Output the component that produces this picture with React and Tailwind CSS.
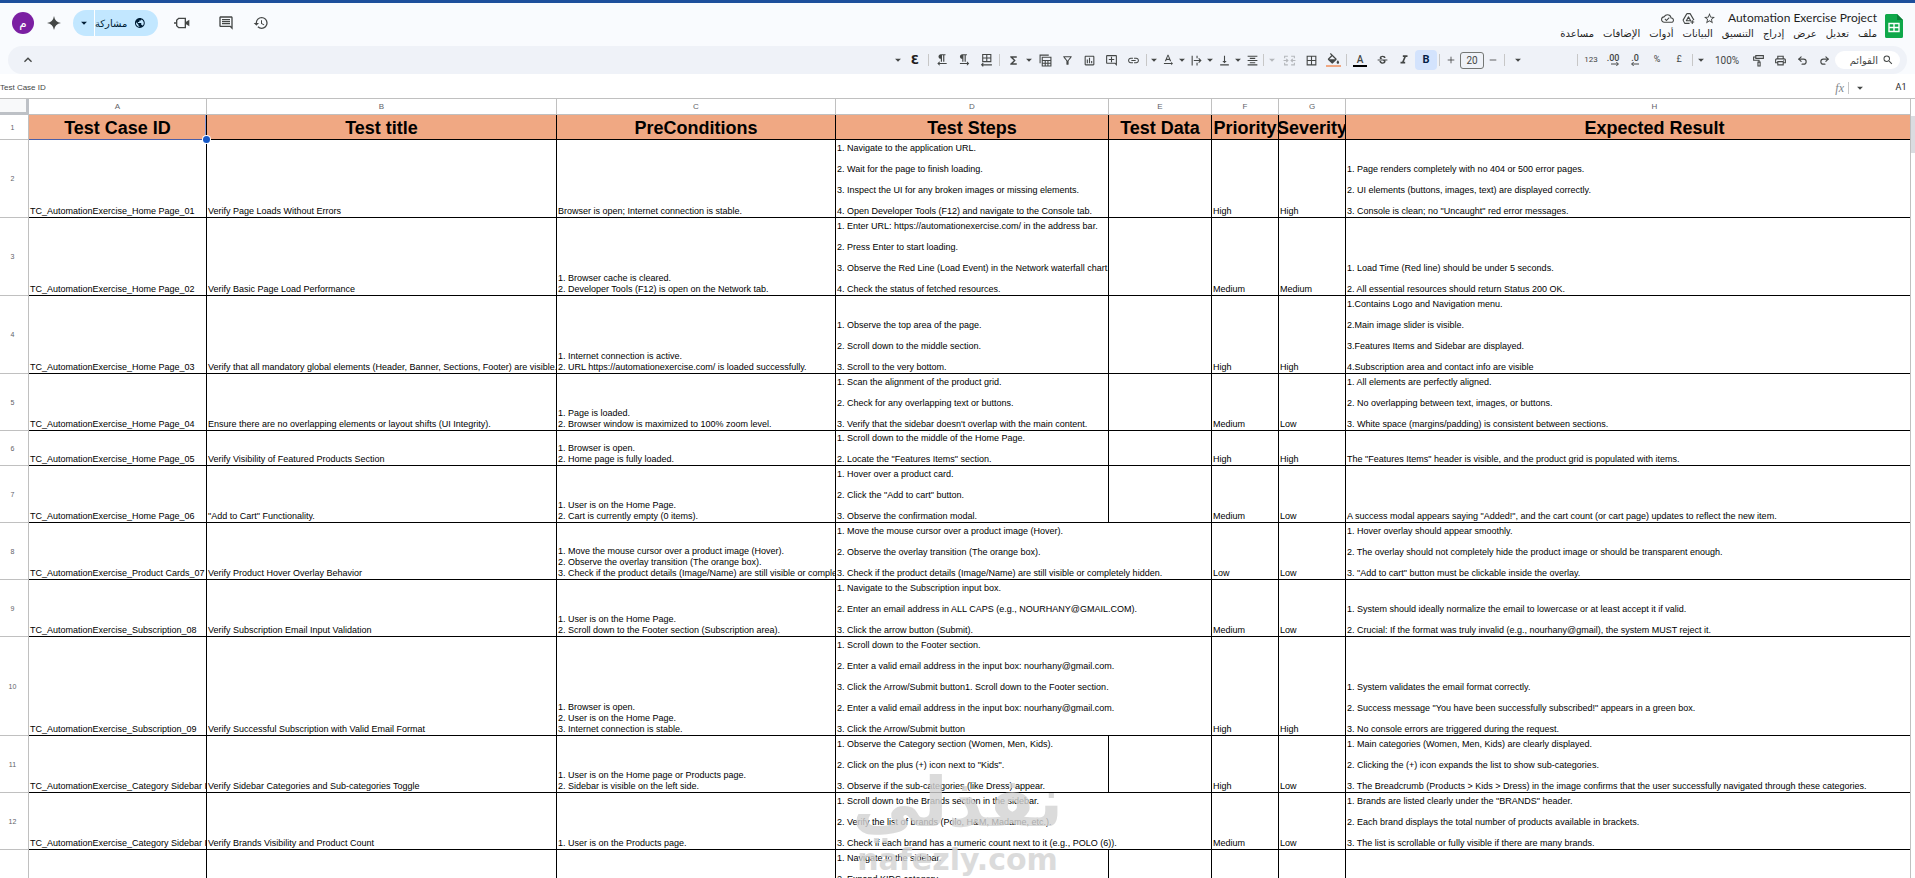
import clsx from "clsx";
import { Redo2, Undo2, Minus, Plus } from "lucide-react";
import {
  MdArrowDropDown,
  MdBorderAll,
  MdFormatAlignCenter,
  MdFormatColorFill,
  MdFormatItalic,
  MdFormatTextdirectionLToR,
  MdFormatTextdirectionRToL,
  MdFunctions,
  MdHistory,
  MdKeyboardArrowUp,
  MdLink,
  MdOutlineAddComment,
  MdOutlineCloudDone,
  MdOutlineComment,
  MdOutlineFilterAlt,
  MdOutlineInsertChart,
  MdOutlinePrint,
  MdPublic,
  MdSearch,
  MdStarBorder,
  MdStrikethroughS,
  MdTextRotationNone,
  MdVerticalAlignBottom,
} from "react-icons/md";

const menus = [
  "ملف",
  "تعديل",
  "عرض",
  "إدراج",
  "التنسيق",
  "البيانات",
  "أدوات",
  "الإضافات",
  "مساعدة",
];

const columns = [
  { letter: "A", title: "Test Case ID", width: "w-[178px]" },
  { letter: "B", title: "Test title", width: "w-[350px]" },
  { letter: "C", title: "PreConditions", width: "w-[279px]" },
  { letter: "D", title: "Test Steps", width: "w-[273px]" },
  { letter: "E", title: "Test Data", width: "w-[103px]" },
  { letter: "F", title: "Priority", width: "w-[67px]" },
  { letter: "G", title: "Severity", width: "w-[67px]" },
  { letter: "H", title: "Expected Result", width: "" },
];

// wide: the steps run over into the empty Test Data cell
const testCases = [
  {
    id: "TC_AutomationExercise_Home Page_01",
    height: "h-[78px]",
    title: "Verify Page Loads Without Errors",
    pre: ["Browser is open; Internet connection is stable."],
    steps: [
      "1. Navigate to the application URL.",
      "2. Wait for the page to finish loading.",
      "3. Inspect the UI for any broken images or missing elements.",
      "4. Open Developer Tools (F12) and navigate to the Console tab.",
    ],
    priority: "High",
    severity: "High",
    expected: [
      "1. Page renders completely with no 404 or 500 error pages.",
      "2. UI elements (buttons, images, text) are displayed correctly.",
      '3. Console is clean; no "Uncaught" red error messages.',
    ],
  },
  {
    id: "TC_AutomationExercise_Home Page_02",
    height: "h-[78px]",
    title: "Verify Basic Page Load Performance",
    pre: [
      "1. Browser cache is cleared.",
      "2. Developer Tools (F12) is open on the Network tab.",
    ],
    steps: [
      "1. Enter URL: https://automationexercise.com/ in the address bar.",
      "2. Press Enter to start loading.",
      "3. Observe the Red Line (Load Event) in the Network waterfall chart.",
      "4. Check the status of fetched resources.",
    ],
    priority: "Medium",
    severity: "Medium",
    expected: [
      "1. Load Time (Red line) should be under 5 seconds.",
      "2. All essential resources should return Status 200 OK.",
    ],
  },
  {
    id: "TC_AutomationExercise_Home Page_03",
    height: "h-[78px]",
    title:
      "Verify that all mandatory global elements (Header, Banner, Sections, Footer) are visible.",
    pre: [
      "1. Internet connection is active.",
      "2. URL https://automationexercise.com/ is loaded successfully.",
    ],
    steps: [
      "1. Observe the top area of the page.",
      "2. Scroll down to the middle section.",
      "3. Scroll to the very bottom.",
    ],
    priority: "High",
    severity: "High",
    expected: [
      "1.Contains Logo and Navigation menu.",
      "2.Main image slider is visible.",
      "3.Features Items and Sidebar are displayed.",
      "4.Subscription area and contact info are visible",
    ],
  },
  {
    id: "TC_AutomationExercise_Home Page_04",
    height: "h-[57px]",
    title: "Ensure there are no overlapping elements or layout shifts (UI Integrity).",
    pre: [
      "1. Page is loaded.",
      "2. Browser window is maximized to 100% zoom level.",
    ],
    steps: [
      "1. Scan the alignment of the product grid.",
      "2. Check for any overlapping text or buttons.",
      "3. Verify that the sidebar doesn't overlap with the main content.",
    ],
    priority: "Medium",
    severity: "Low",
    expected: [
      "1. All elements are perfectly aligned.",
      "2. No overlapping between text, images, or buttons.",
      "3. White space (margins/padding) is consistent between sections.",
    ],
  },
  {
    id: "TC_AutomationExercise_Home Page_05",
    height: "h-[35px]",
    title: "Verify Visibility of Featured Products Section",
    pre: ["1. Browser is open.", "2. Home page is fully loaded."],
    steps: [
      "1. Scroll down to the middle of the Home Page.",
      '2. Locate the "Features Items" section.',
    ],
    priority: "High",
    severity: "High",
    expected: [
      'The "Features Items" header is visible, and the product grid is populated with items.',
    ],
  },
  {
    id: "TC_AutomationExercise_Home Page_06",
    height: "h-[57px]",
    title: '"Add to Cart" Functionality.',
    pre: ["1. User is on the Home Page.", "2. Cart is currently empty (0 items)."],
    steps: [
      "1. Hover over a product card.",
      '2. Click the "Add to cart" button.',
      "3. Observe the confirmation modal.",
    ],
    priority: "Medium",
    severity: "Low",
    expected: [
      'A success modal appears saying "Added!", and the cart count (or cart page) updates to reflect the new item.',
    ],
  },
  {
    id: "TC_AutomationExercise_Product Cards_07",
    height: "h-[57px]",
    wide: true,
    title: "Verify Product Hover Overlay Behavior",
    pre: [
      "1. Move the mouse cursor over a product image (Hover).",
      "2. Observe the overlay transition (The orange box).",
      "3. Check if the product details (Image/Name) are still visible or completely hidden.",
    ],
    steps: [
      "1. Move the mouse cursor over a product image (Hover).",
      "2. Observe the overlay transition (The orange box).",
      "3. Check if the product details (Image/Name) are still visible or completely hidden.",
    ],
    priority: "Low",
    severity: "Low",
    expected: [
      "1. Hover overlay should appear smoothly.",
      "2. The overlay should not completely hide the product image or should be transparent enough.",
      '3. "Add to cart" button must be clickable inside the overlay.',
    ],
  },
  {
    id: "TC_AutomationExercise_Subscription_08",
    height: "h-[57px]",
    wide: true,
    title: "Verify Subscription Email Input Validation",
    pre: [
      "1. User is on the Home Page.",
      "2. Scroll down to the Footer section (Subscription area).",
    ],
    steps: [
      "1. Navigate to the Subscription input box.",
      "2. Enter an email address in ALL CAPS (e.g., NOURHANY@GMAIL.COM).",
      "3. Click the arrow button (Submit).",
    ],
    priority: "Medium",
    severity: "Low",
    expected: [
      "1. System should ideally normalize the email to lowercase or at least accept it if valid.",
      "2. Crucial: If the format was truly invalid (e.g., nourhany@gmail), the system MUST reject it.",
    ],
  },
  {
    id: "TC_AutomationExercise_Subscription_09",
    height: "h-[99px]",
    wide: true,
    title: "Verify Successful Subscription with Valid Email Format",
    pre: [
      "1. Browser is open.",
      "2. User is on the Home Page.",
      "3. Internet connection is stable.",
    ],
    steps: [
      "1. Scroll down to the Footer section.",
      "2. Enter a valid email address in the input box: nourhany@gmail.com.",
      "3. Click the Arrow/Submit button1. Scroll down to the Footer section.",
      "2. Enter a valid email address in the input box: nourhany@gmail.com.",
      "3. Click the Arrow/Submit button",
    ],
    priority: "High",
    severity: "High",
    expected: [
      "1. System validates the email format correctly.",
      '2. Success message "You have been successfully subscribed!" appears in a green box.',
      "3. No console errors are triggered during the request.",
    ],
  },
  {
    id: "TC_AutomationExercise_Category Sidebar Interaction_10",
    height: "h-[57px]",
    title: "Verify Sidebar Categories and Sub-categories Toggle",
    pre: [
      "1. User is on the Home page or Products page.",
      "2. Sidebar is visible on the left side.",
    ],
    steps: [
      "1. Observe the Category section (Women, Men, Kids).",
      '2. Click on the plus (+) icon next to "Kids".',
      "3. Observe if the sub-categories (like Dress) appear.",
    ],
    priority: "High",
    severity: "Low",
    expected: [
      "1. Main categories (Women, Men, Kids) are clearly displayed.",
      "2. Clicking the (+) icon expands the list to show sub-categories.",
      "3. The Breadcrumb (Products > Kids > Dress) in the image confirms that the user successfully navigated through these categories.",
    ],
  },
  {
    id: "TC_AutomationExercise_Category Sidebar Interaction_11",
    height: "h-[57px]",
    wide: true,
    title: "Verify Brands Visibility and Product Count",
    pre: ["1. User is on the Products page."],
    steps: [
      "1. Scroll down to the Brands section in the sidebar.",
      "2. Verify the list of brands (Polo, H&M, Madame, etc.).",
      "3. Check if each brand has a numeric count next to it (e.g., POLO (6)).",
    ],
    priority: "Medium",
    severity: "Low",
    expected: [
      '1. Brands are listed clearly under the "BRANDS" header.',
      "2. Each brand displays the total number of products available in brackets.",
      "3. The list is scrollable or fully visible if there are many brands.",
    ],
  },
  {
    id: "",
    height: "h-[78px]",
    title: "",
    pre: [],
    steps: ["1. Navigate to the sidebar.", "2. Expand KIDS category.", "", ""],
    priority: "",
    severity: "",
    expected: [],
  },
];

function Icon({ children, className = "size-[14px]" }) {
  return (
    <svg
      viewBox="0 0 24 24"
      fill="none"
      stroke="currentColor"
      strokeWidth="2"
      className={className}
      aria-hidden="true"
    >
      {children}
    </svg>
  );
}

function SheetsLogo() {
  return (
    <svg viewBox="0 0 18 24" className="mt-1 h-6 w-[18px] shrink-0" aria-hidden="true">
      <path d="M1.500 0H12l6 6v16.500a1.500 1.500 0 0 1-1.500 1.500h-15A1.500 1.500 0 0 1 0 22.500v-21A1.500 1.500 0 0 1 1.500 0z" fill="#0fa84a" />
      <path d="M12 0l6 6h-6z" fill="#0b7f38" />
      <path d="M4 9.500h10v8H4zM4 13.500h10M9 9.500v8" fill="none" stroke="#fff" strokeWidth="1.400" />
    </svg>
  );
}

function Tool({ label, narrow, active, children }) {
  return (
    <button
      aria-label={label}
      className={clsx(
        "flex h-5 shrink-0 items-center justify-center rounded-sm",
        narrow ? "w-[18px]" : "w-[22px]",
        active && "bg-[#d3e3fd] text-[#041e49]"
      )}
    >
      {children}
    </button>
  );
}

function Caret({ label, narrow, muted }) {
  return (
    <button
      aria-label={label}
      className={clsx(
        "flex h-5 shrink-0 items-center justify-center",
        narrow ? "w-[10px]" : "w-3",
        muted && "text-[#b4b7bb]"
      )}
    >
      <MdArrowDropDown className="size-[14px] shrink-0" />
    </button>
  );
}

function Divider() {
  return <span className="mx-[2px] h-3 w-px shrink-0 bg-[#c7c7c7]" />;
}

function Decimals({ text, path }) {
  return (
    <span className="flex flex-col items-center text-[9px] leading-[8px] font-medium">
      <span dir="ltr">{text}</span>
      <svg viewBox="0 0 12 6" className="h-1 w-2 self-start" fill="none" stroke="currentColor" strokeWidth="1.500" aria-hidden="true">
        <path d={path} />
      </svg>
    </span>
  );
}

function Header() {
  return (
    <header dir="rtl" className="flex h-[43px] items-start justify-between px-3">
      <div className="flex pt-[7px]">
        <SheetsLogo />
        <div className="ms-2">
          <div className="flex h-4 items-center text-[#444746]">
            <h1 className="font-['Lato'] text-[12px] leading-4 text-[#1f1f1f]">
              Automation Exercise Project
            </h1>
            <div className="ms-3 flex items-center gap-2">
              <button aria-label="Star"><MdStarBorder className="size-[13px]" /></button>
              <button aria-label="Move">
                <Icon className="size-[13px]">
                  <path d="M9 3h6l7 12M9 3L2 15l3 6h9M12 9l-4 7h8z" strokeLinejoin="round" />
                  <path d="M19 15v7M15.500 18.500h7" />
                </Icon>
              </button>
              <button aria-label="Saved to Drive"><MdOutlineCloudDone className="size-[13px]" /></button>
            </div>
          </div>
          <nav className="flex gap-[9px] text-[10px] leading-4 text-[#1f1f1f]">
            {menus.map((menu) => (
              <button key={menu}>{menu}</button>
            ))}
          </nav>
        </div>
      </div>

      <div className="flex items-center pt-[7px] text-[#444746]">
        <button aria-label="History" className="me-[19px]"><MdHistory className="size-4" /></button>
        <button aria-label="Comments" className="me-7"><MdOutlineComment className="size-4" /></button>
        <button aria-label="Meet" className="me-4">
          <Icon className="size-4">
            <path d="M0 12h4M4 8l3-3h10v14H7l-3-3z" />
            <path d="M17 11l6-4v10l-6-4z" fill="currentColor" stroke="none" />
          </Icon>
        </button>
        <div className="me-3 flex h-[26px] overflow-hidden rounded-full bg-[#c2e7ff] text-[10px] text-[#001d35]">
          <button className="flex w-[63px] items-center gap-[7px] ps-3">
            <MdPublic className="size-3" />
            مشاركة
          </button>
          <button aria-label="Share options" className="flex w-[22px] items-center justify-center border-s border-white">
            <MdArrowDropDown className="size-[14px]" />
          </button>
        </div>
        <button aria-label="Gemini" className="me-[13px]">
          <Icon className="size-[14px]">
            <path d="M12 0q1.500 10.500 12 12q-10.500 1.500-12 12q-1.500-10.500-12-12q10.500-1.500 12-12z" fill="currentColor" stroke="none" />
          </Icon>
        </button>
        <button className="size-[22px] rounded-full bg-[#7b1fa2] text-[12px] leading-5 text-white">م</button>
      </div>
    </header>
  );
}

function Toolbar() {
  return (
    <div
      dir="rtl"
      className="mx-2 flex h-7 items-center rounded-full bg-[#eff2f8] ps-[7px] pe-3 text-[10px] text-[#444746]"
    >
      <label className="flex h-[18px] w-[65px] shrink-0 items-center gap-1 rounded-full bg-white ps-[6px]">
        <MdSearch className="size-3 shrink-0" />
        <input
          aria-label="القوائم"
          placeholder="القوائم"
          className="w-full min-w-0 bg-transparent text-[10px] outline-none placeholder:text-[#444746]"
        />
      </label>
      <Tool label="Undo"><Redo2 className="size-[11px]" strokeWidth={2.5} /></Tool>
      <Tool label="Redo"><Undo2 className="size-[11px]" strokeWidth={2.5} /></Tool>
      <Tool label="Print"><MdOutlinePrint className="size-[13px]" /></Tool>
      <Tool label="Paint format">
        <Icon className="size-[13px]">
          <path d="M7 3h14v5H7zM7 5.500H3v6h10v3M11 15h4v7h-4z" />
        </Icon>
      </Tool>
      <span className="w-10 shrink-0 text-center text-[10px]">100%</span>
      <Caret label="Zoom" />
      <Divider />
      <Tool label="Currency"><span className="text-[9px]">£</span></Tool>
      <Tool label="Percent"><span className="text-[9px]">%</span></Tool>
      <Tool label="Decrease decimals"><Decimals text=".0" path="M12 3H1M4 0L1 3l3 3" /></Tool>
      <Tool label="Increase decimals"><Decimals text=".00" path="M0 3h11M8 0l3 3l-3 3" /></Tool>
      <Tool label="Number format"><span className="text-[8px]">123</span></Tool>
      <Divider />
      <button aria-label="Font" className="flex h-5 w-[68px] shrink-0 items-center justify-end pe-1">
        <MdArrowDropDown className="size-[14px]" />
      </button>
      <Divider />
      <Tool label="Decrease font size" narrow><Minus className="size-[10px]" /></Tool>
      <input
        aria-label="Font size"
        defaultValue="20"
        className="h-[17px] w-6 shrink-0 rounded-[3px] border border-[#747775] bg-transparent text-center text-[10px]"
      />
      <Tool label="Increase font size" narrow><Plus className="size-[10px]" /></Tool>
      <Divider />
      <Tool label="Bold" active><span className="text-[11px] font-bold">B</span></Tool>
      <Tool label="Italic"><MdFormatItalic className="size-[14px]" /></Tool>
      <Tool label="Strikethrough"><MdStrikethroughS className="size-[13px]" /></Tool>
      <Tool label="Text color">
        <span className="w-[14px] border-b-2 border-black text-center text-[10px] leading-[11px] font-medium">A</span>
      </Tool>
      <Divider />
      <Tool label="Fill color">
        <span className="flex h-[14px] w-[15px] justify-center overflow-hidden border-b-2 border-[#f0a883]">
          <MdFormatColorFill className="size-[15px] shrink-0" />
        </span>
      </Tool>
      <Tool label="Borders"><MdBorderAll className="size-[13px]" /></Tool>
      <Tool label="Merge cells">
        <Icon className="size-[13px] text-[#b4b7bb]">
          <path d="M3 8V4h6M15 4h6v4M3 16v4h6M15 20h6v-4M1 12h7M16 12h7M6 9l3 3l-3 3M18 9l-3 3l3 3" />
        </Icon>
      </Tool>
      <Caret label="Merge type" muted />
      <Divider />
      <Tool label="Horizontal align" narrow><MdFormatAlignCenter className="size-[13px]" /></Tool>
      <Caret label="Horizontal align options" narrow />
      <Tool label="Vertical align" narrow><MdVerticalAlignBottom className="size-[13px]" /></Tool>
      <Caret label="Vertical align options" narrow />
      <Tool label="Text wrapping" narrow>
        <Icon className="size-[13px]">
          <path d="M4 3v18M7 12h13M16 8l4 4l-4 4M13 3v5M13 16v5" />
        </Icon>
      </Tool>
      <Caret label="Text wrapping options" narrow />
      <Tool label="Text rotation" narrow><MdTextRotationNone className="size-[14px]" /></Tool>
      <Caret label="Text rotation options" narrow />
      <Divider />
      <Tool label="Insert link"><MdLink className="size-[13px]" /></Tool>
      <Tool label="Insert comment"><MdOutlineAddComment className="size-[13px]" /></Tool>
      <Tool label="Insert chart"><MdOutlineInsertChart className="size-[13px]" /></Tool>
      <Tool label="Create filter"><MdOutlineFilterAlt className="size-[13px]" /></Tool>
      <Tool label="Table views">
        <Icon className="size-[13px]">
          <path d="M2 17V2h16M6 6h16v16H6zM6 12h16M11.500 12v10M16.500 12v10M6 17h16" />
        </Icon>
      </Tool>
      <Caret label="Table view options" narrow />
      <Tool label="Functions"><MdFunctions className="size-[13px]" /></Tool>
      <Divider />
      <Tool label="Sheet direction">
        <Icon className="size-[13px]">
          <path d="M5 1h15v13H5zM12.500 1v13M5 7.500h15M22 20H3M6 17l-3 3l3 3" />
        </Icon>
      </Tool>
      <Tool label="Left to right"><MdFormatTextdirectionLToR className="size-[14px]" /></Tool>
      <Tool label="Right to left"><MdFormatTextdirectionRToL className="size-[14px]" /></Tool>
      <Divider />
      <Tool label="Input tools"><span className="text-[12px] leading-4 font-bold text-[#1f1f1f]">Ɛ</span></Tool>
      <Caret label="Input tools options" />
      <button aria-label="Hide the menus" className="ms-auto">
        <MdKeyboardArrowUp className="size-4" />
      </button>
    </div>
  );
}

function FormulaBar() {
  return (
    <div dir="rtl" className="flex h-6 items-center bg-white pt-1 text-[#444746]">
      <input
        aria-label="Cell"
        dir="ltr"
        defaultValue="A1"
        className="mr-1 ml-6 w-5 text-center text-[9px] text-[#1f1f1f] outline-none"
      />
      <button aria-label="Named ranges"><MdArrowDropDown className="size-[14px]" /></button>
      <span className="mx-1 h-3 w-px bg-[#c7c7c7]" />
      <span className="font-['Liberation_Serif'] text-[12px] text-[#80868b] italic">fx</span>
      <input
        aria-label="Formula"
        dir="ltr"
        defaultValue="Test Case ID"
        className="min-w-0 flex-1 font-['Liberation_Sans'] text-[8px] outline-none"
      />
    </div>
  );
}

function Cell({ lines, spaced, wide, last }) {
  return (
    <td
      colSpan={wide ? 2 : 1}
      className={clsx(
        "overflow-hidden border-b border-black pl-px align-bottom",
        !last && "border-r"
      )}
    >
      <div className={clsx("flex flex-col justify-end", spaced && "gap-[10px]")}>
        {lines.map((line, i) => (
          <p key={i} className="h-[11px] whitespace-nowrap">{line}</p>
        ))}
      </div>
    </td>
  );
}

function Sheet() {
  return (
    <div className="flex min-h-0 flex-1 overflow-hidden border-t border-[#c0c0c0] bg-white font-['Liberation_Sans']">
      {/* the last column runs on past the right edge */}
      <div className="min-w-0 flex-1 overflow-hidden">
        <table className="w-[calc(100%+53px)] table-fixed border-separate border-spacing-0 text-[9px] leading-[11px] text-black">
          <thead>
            <tr className="h-4 text-[8px] leading-[10px] text-[#5f6368]">
              <td className="w-[29px] border-r-[3px] border-b-[3px] border-[#bdc1c6] bg-[#f8f9fa]" />
              {columns.map((column) => (
                <th
                  key={column.letter}
                  className={clsx("border-b border-[#c0c0c0] font-normal", column.width, column.letter !== "H" && "border-r")}
                >
                  {column.letter}
                </th>
              ))}
            </tr>
          </thead>
          <tbody>
            <tr className="h-[25px]">
              <th className="border-r border-b border-[#c0c0c0] pr-[3px] text-[7px] font-normal text-[#5f6368]">1</th>
              {columns.map(({ letter, title }) => (
                <th
                  key={letter}
                  className={clsx(
                    "relative border-b bg-[#f0a883] pt-[2px] text-[18px] leading-5 font-bold whitespace-nowrap",
                    letter === "A" ? "border-r border-r-black border-b-[#4a5fa8]" : "border-black",
                    letter !== "H" && "border-r"
                  )}
                >
                  <span className="flex justify-center">{title}</span>
                  {letter === "A" && (
                    <>
                      <span className="absolute inset-y-0 right-0 w-px bg-[#8a9bd8]" />
                      <span className="absolute -right-1 -bottom-1 z-10 size-[7px] rounded-full bg-[#1558c8] ring-1 ring-white" />
                    </>
                  )}
                </th>
              ))}
            </tr>
            {testCases.map((test, i) => (
              <tr key={i} className={test.height}>
                <th className="border-r border-b border-[#c0c0c0] pr-[3px] text-[7px] font-normal text-[#5f6368]">
                  {i + 2}
                </th>
                <Cell lines={[test.id]} />
                <Cell lines={[test.title]} />
                <Cell lines={test.pre} />
                <Cell lines={test.steps} spaced wide={test.wide} />
                {!test.wide && <Cell lines={[]} />}
                <Cell lines={[test.priority]} />
                <Cell lines={[test.severity]} />
                <Cell lines={test.expected} spaced last />
              </tr>
            ))}
          </tbody>
        </table>
      </div>
      <div className="w-[5px] shrink-0 border-l border-[#c0c0c0] pt-[17px]">
        <div className="h-[37px] bg-[#dadce0]" />
      </div>
    </div>
  );
}

function Watermark() {
  return (
    <div className="pointer-events-none absolute inset-x-0 bottom-0 flex flex-col items-center font-['DejaVu_Sans'] font-bold text-[#d3d3d3] opacity-80">
      <span className="text-[69px] leading-[80px]">نفذلي</span>
      <span className="text-[30px] leading-9">nafezly.com</span>
    </div>
  );
}

function App() {
  return (
    <div className="relative flex h-screen flex-col overflow-hidden border-t-[3px] border-[#1d4f9c] bg-[#f9fbfe] font-['Roboto','DejaVu_Sans',sans-serif]">
      <Header />
      <Toolbar />
      <FormulaBar />
      <Sheet />
      <Watermark />
    </div>
  );
}

export default App;
